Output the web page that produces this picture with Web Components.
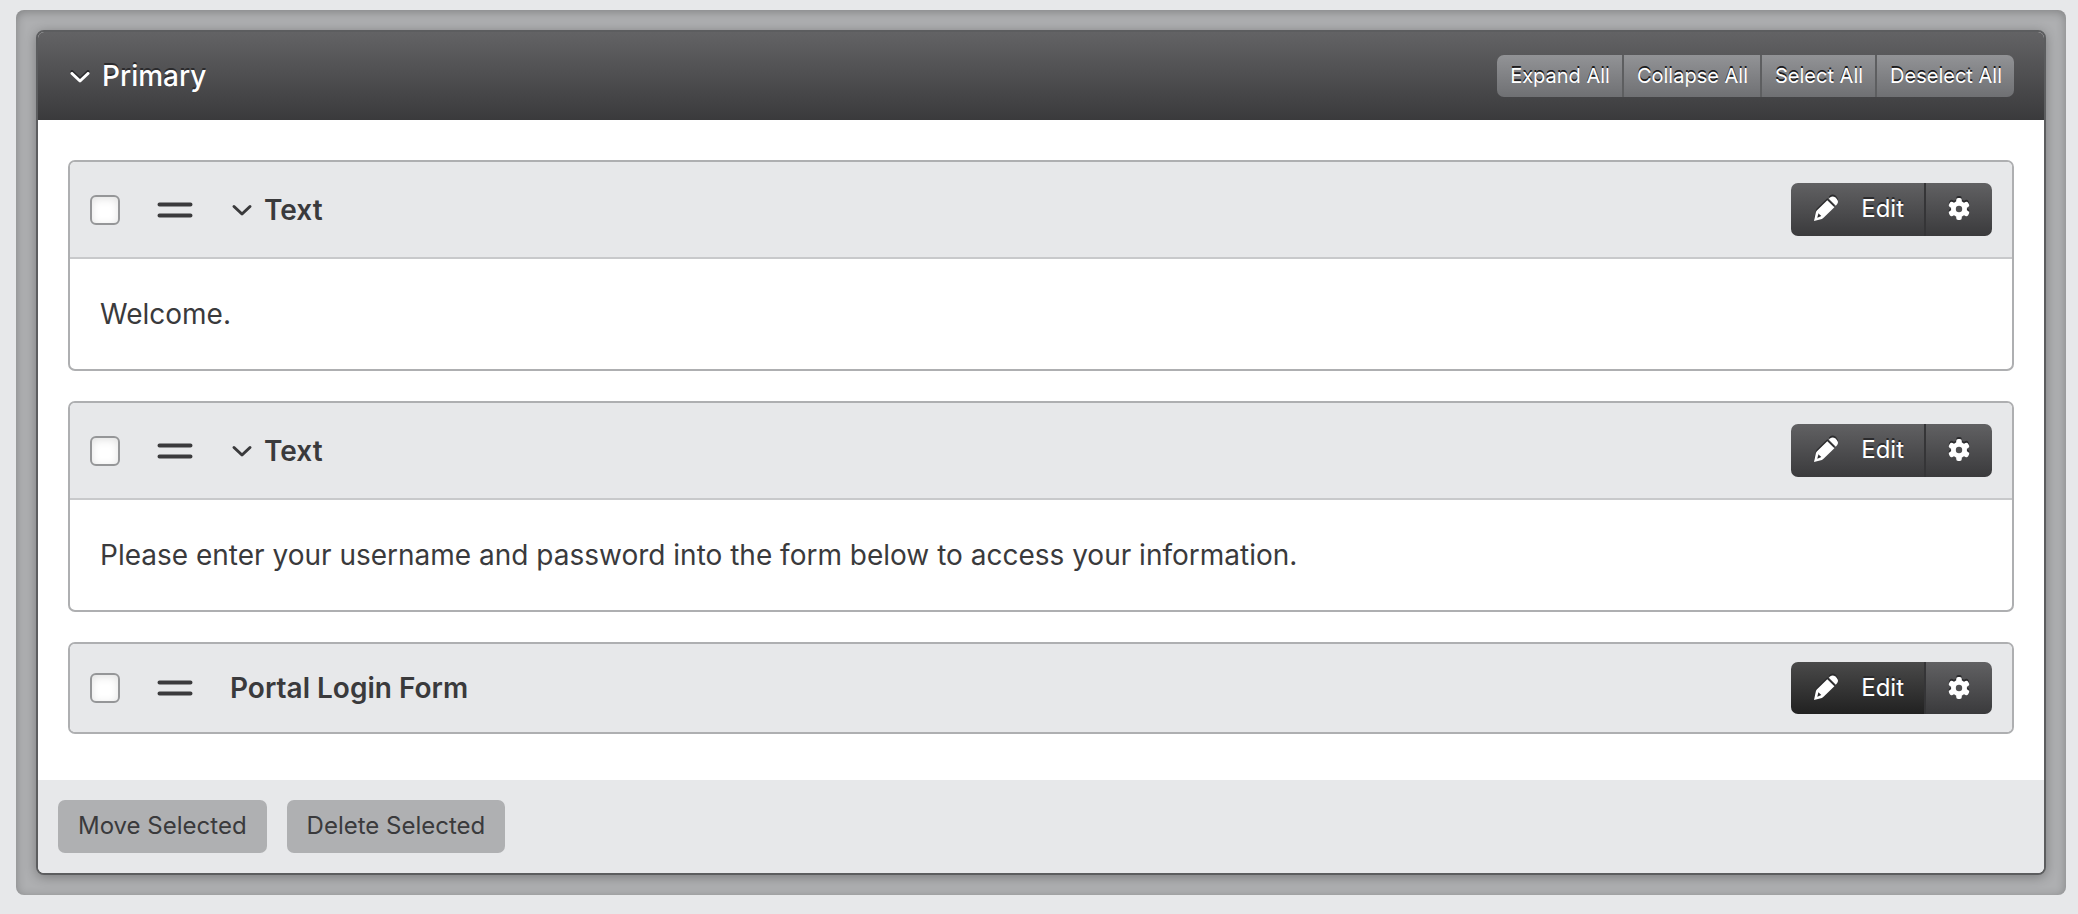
<!DOCTYPE html>
<html lang="en">
<head>
<meta charset="utf-8">
<title>Page regions</title>
<meta name="viewport" content="width=device-width, initial-scale=1">
<style>
  body {
    margin: 0;
    padding: 10px 12px 19px 16px;
    background: #e7e8ea;
    color: #3a3a3c;
    font-family: Inter, "Liberation Sans", sans-serif;
    font-size: 28px;
    line-height: 40px;
  }
  p { margin: 0; }
</style>
</head>
<body>
<region-tray>
  <region-panel heading="Primary">
    <content-block heading="Text" collapsible><p>Welcome.</p></content-block>
    <content-block heading="Text" collapsible><p>Please enter your username and password into the form below to access your information.</p></content-block>
    <content-block heading="Portal Login Form" active></content-block>
  </region-panel>
</region-tray>

<script>
const define = (name, html, setup) => {
  const template = document.createElement('template');
  template.innerHTML = html;
  customElements.define(name, class extends HTMLElement {
    constructor() {
      super();
      this.attachShadow({ mode: 'open' }).append(template.content.cloneNode(true));
    }
    connectedCallback() { if (setup) setup(this, this.shadowRoot); }
  });
};

define('region-tray', `
  <style>
    :host {
      display: block;
      padding: 20px;
      border-radius: 8px;
      background: #aeafb1;
      box-shadow: inset 0 2px 10px rgba(0, 0, 0, .25);
    }
  </style>
  <slot></slot>`);

define('chevron-icon', `
  <style>
    :host { display: block; flex: none; }
    svg { display: block; overflow: visible; }
  </style>
  <svg width="20" height="12" viewBox="0 0 20 12" fill="none" stroke="currentColor" stroke-width="3" stroke-linecap="round" stroke-linejoin="round" aria-hidden="true"><path d="M2 2.500 10 10 18 2.500"/></svg>`);

define('bulk-links', `
  <style>
    :host { display: flex; border-radius: 7px; overflow: hidden; background: linear-gradient(#929396, #6f7073); }
    button {
      box-sizing: border-box;
      height: 42px;
      margin: 0;
      padding: 0 12px 0 13px;
      border: 0;
      border-right: 2px solid #5d5e60;
      background: none;
      color: #fff;
      font: 400 20px/40px Inter, "Liberation Sans", sans-serif;
      text-shadow: 0 -2px 0 #1c1c1e;
      white-space: nowrap;
    }
    button:last-child { border-right: 0; }
  </style>
  <button type="button">Expand All</button><button type="button">Collapse All</button><button type="button">Select All</button><button type="button">Deselect All</button>`);

define('edit-actions', `
  <style>
    :host { display: flex; flex: none; height: 53px; border-radius: 7px; overflow: hidden; }
    :host([active]) { height: 52px; }
    button {
      display: flex;
      align-items: center;
      justify-content: center;
      margin: 0;
      padding: 0 0 2px;
      border: 0;
      background: linear-gradient(#616163, #3a3a3c);
      color: #fff;
      font: 400 24px/50px Inter, "Liberation Sans", sans-serif;
      text-shadow: 0 -2px 0 #2b2b2d;
    }
    .edit { gap: 22px; padding: 0 20px 2px 22px; border-right: 2px solid #353537; }
    :host([active]) button { padding-bottom: 0; }
    :host([active]) .edit { background: linear-gradient(#4a4a4a, #212121); }
    .more { width: 66px; }
    svg { display: block; filter: drop-shadow(0 -2px 0 #2b2b2d); }
  </style>
  <button type="button" class="edit">
    <svg width="26" height="28" viewBox="0 0 26 28" fill="#fff" aria-hidden="true">
      <path fill-rule="evenodd" d="M1 26 2.800 17.500Q3 16.400 3.800 15.600L14.300 5.200 21.400 12.300 10.800 22.600Q10 23.500 8.900 23.900ZM4.300 22.700 8.300 21.100 5.400 18.200Z"/>
      <path d="M15.800 3.700 17.300 2.300Q19.800.4 22.400 2.600L23.800 4Q26 6.600 24.200 9L22.800 10.700Z"/>
    </svg>
    <span>Edit</span>
  </button>
  <button type="button" class="more" aria-label="Settings">
    <svg width="24" height="24" viewBox="0 0 24 24" aria-hidden="true">
      <g fill="#fff">
        <circle cx="12" cy="12" r="8"/>
        <rect x="9.200" y="1" width="5.600" height="22" rx="2"/>
        <rect x="9.200" y="1" width="5.600" height="22" rx="2" transform="rotate(60 12 12)"/>
        <rect x="9.200" y="1" width="5.600" height="22" rx="2" transform="rotate(120 12 12)"/>
      </g>
      <circle cx="12" cy="12" r="3.200" fill="#4f4f51"/>
    </svg>
  </button>`);

define('content-block', `
  <style>
    :host { display: block; border: 2px solid #aeafb1; border-radius: 7px; overflow: hidden; background: #fff; }
    header { display: flex; align-items: center; padding: 21px 20px; background: #e7e8ea; }
    :host([active]) header { padding: 18px 20px; }
    input {
      appearance: none;
      box-sizing: border-box;
      width: 30px;
      height: 30px;
      margin: 0;
      border: 2px solid #959698;
      border-radius: 6px;
      background: #fff;
      box-shadow: inset 0 2px 8px rgba(0, 0, 0, .12);
    }
    .grip { display: block; margin: 0 37px; }
    .title { display: flex; align-items: center; flex: 1; gap: 12px; }
    .toggle { display: flex; padding: 0 0 0 2px; margin: 0; border: 0; background: none; color: inherit; }
    h3 { margin: 0; font-size: 28px; font-weight: 600; line-height: 40px; }
    .body { padding: 35px 30px; border-top: 2px solid #c8c9cb; }
    :host(:not([collapsible])) .body, :host(:not([collapsible])) .toggle { display: none; }
  </style>
  <header>
    <input type="checkbox">
    <svg class="grip" width="36" height="18" viewBox="0 0 36 18" stroke="#3a3a3c" stroke-width="4" stroke-linecap="round" role="img" aria-label="Drag"><path d="M2.500 3.500H33.500M2.500 14.500H33.500"/></svg>
    <div class="title"><button type="button" class="toggle" aria-label="Toggle"><chevron-icon></chevron-icon></button><h3></h3></div>
    <edit-actions></edit-actions>
  </header>
  <div class="body"><slot></slot></div>`, (host, root) => {
  const name = host.getAttribute('heading');
  root.querySelector('h3').textContent = name;
  root.querySelector('input').setAttribute('aria-label', name);
  root.querySelector('edit-actions').toggleAttribute('active', host.hasAttribute('active'));
});

define('footer-actions', `
  <style>
    :host { display: flex; gap: 20px; padding: 20px; background: #e7e8ea; }
    button {
      height: 53px;
      margin: 0;
      padding: 0 20px 2px;
      border: 0;
      border-radius: 7px;
      background: #afb0b2;
      color: #3a3a3c;
      font: 400 24px/50px Inter, "Liberation Sans", sans-serif;
    }
  </style>
  <button type="button">Move Selected</button>
  <button type="button">Delete Selected</button>`);

define('region-panel', `
  <style>
    :host {
      display: block;
      border: 2px solid #5c5d5f;
      border-radius: 8px;
      overflow: hidden;
      background: #fff;
      box-shadow: 0 2px 12px rgba(0, 0, 0, .3);
    }
    header {
      display: flex;
      align-items: center;
      justify-content: space-between;
      box-sizing: border-box;
      height: 88px;
      padding: 0 30px;
      background: linear-gradient(#636365, #3a3a3c);
      color: #fff;
      text-shadow: 0 -2px 0 #2b2b2d;
    }
    .title { display: flex; align-items: center; gap: 12px; }
    .toggle { display: flex; padding: 2px 0 0 2px; margin: 0; border: 0; background: none; color: inherit; filter: drop-shadow(0 -2px 0 #2b2b2d); }
    h2 { margin: 0; font-size: 28px; font-weight: 500; line-height: 40px; }
    .blocks { display: flex; flex-direction: column; gap: 30px; padding: 40px 30px 46px; }
  </style>
  <header>
    <div class="title"><button type="button" class="toggle" aria-label="Toggle"><chevron-icon></chevron-icon></button><h2></h2></div>
    <bulk-links></bulk-links>
  </header>
  <div class="blocks"><slot></slot></div>
  <footer-actions></footer-actions>`, (host, root) => {
  root.querySelector('h2').textContent = host.getAttribute('heading');
});
</script>
</body>
</html>
